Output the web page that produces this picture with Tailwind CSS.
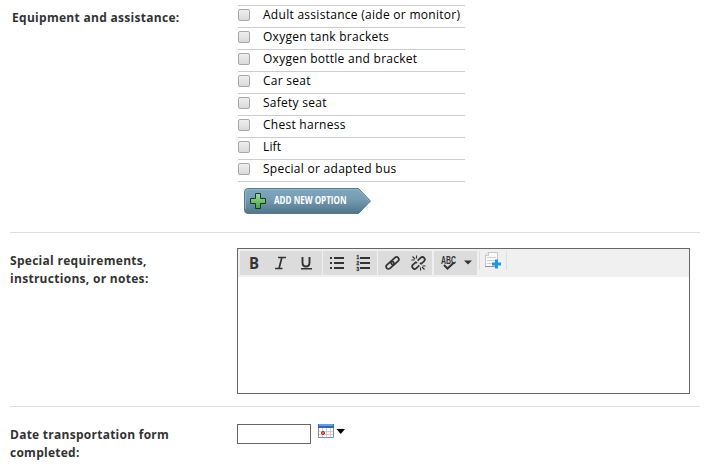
<!DOCTYPE html>
<html lang="en">
<head>
    <meta charset="UTF-8">
    <meta name="viewport" content="width=device-width, initial-scale=1.0">
    <title>Transportation Form</title>
    <script src="https://cdn.jsdelivr.net/npm/@tailwindcss/browser@4"></script>
</head>
<body class="bg-white w-[716px] h-[469px] overflow-hidden font-['Open_Sans',sans-serif] text-[12px] text-black">
    <form class="ml-[10px] w-[690px]">

        <!-- Equipment -->
        <div class="flex h-[232px]">
            <div class="w-[228px] pl-[2px] pt-[9px] leading-[18px] font-bold text-[#333] tracking-[0.29px]">Equipment and assistance:</div>
            <div class="w-[227px] pt-[5px]">
                <div class="border-t border-[#ccc]">
                    <label class="flex h-[22px] border-b border-[#ccc] pt-[3px]"><input type="checkbox" class="appearance-none w-[12px] h-[12px] rounded-[2px] border border-[#a8a8a8] bg-linear-to-b from-[#eee] to-[#dadada]"><span class="ml-[13px] -mt-[3px] leading-[18px] whitespace-nowrap tracking-[0.28px]">Adult assistance (aide or monitor)</span></label>
                    <label class="flex h-[22px] border-b border-[#ccc] pt-[3px]"><input type="checkbox" class="appearance-none w-[12px] h-[12px] rounded-[2px] border border-[#a8a8a8] bg-linear-to-b from-[#eee] to-[#dadada]"><span class="ml-[13px] -mt-[3px] leading-[18px] whitespace-nowrap tracking-[0.26px]">Oxygen tank brackets</span></label>
                    <label class="flex h-[22px] border-b border-[#ccc] pt-[3px]"><input type="checkbox" class="appearance-none w-[12px] h-[12px] rounded-[2px] border border-[#a8a8a8] bg-linear-to-b from-[#eee] to-[#dadada]"><span class="ml-[13px] -mt-[3px] leading-[18px] whitespace-nowrap tracking-[0.26px]">Oxygen bottle and bracket</span></label>
                    <label class="flex h-[22px] border-b border-[#ccc] pt-[3px]"><input type="checkbox" class="appearance-none w-[12px] h-[12px] rounded-[2px] border border-[#a8a8a8] bg-linear-to-b from-[#eee] to-[#dadada]"><span class="ml-[13px] -mt-[3px] leading-[18px] whitespace-nowrap tracking-[0.26px]">Car seat</span></label>
                    <label class="flex h-[22px] border-b border-[#ccc] pt-[3px]"><input type="checkbox" class="appearance-none w-[12px] h-[12px] rounded-[2px] border border-[#a8a8a8] bg-linear-to-b from-[#eee] to-[#dadada]"><span class="ml-[13px] -mt-[3px] leading-[18px] whitespace-nowrap tracking-[0.26px]">Safety seat</span></label>
                    <label class="flex h-[22px] border-b border-[#ccc] pt-[3px]"><input type="checkbox" class="appearance-none w-[12px] h-[12px] rounded-[2px] border border-[#a8a8a8] bg-linear-to-b from-[#eee] to-[#dadada]"><span class="ml-[13px] -mt-[3px] leading-[18px] whitespace-nowrap tracking-[0.26px]">Chest harness</span></label>
                    <label class="flex h-[22px] border-b border-[#ccc] pt-[3px]"><input type="checkbox" class="appearance-none w-[12px] h-[12px] rounded-[2px] border border-[#a8a8a8] bg-linear-to-b from-[#eee] to-[#dadada]"><span class="ml-[13px] -mt-[3px] leading-[18px] whitespace-nowrap tracking-[0.15px]">Lift</span></label>
                    <label class="flex h-[22px] border-b border-[#ccc] pt-[3px]"><input type="checkbox" class="appearance-none w-[12px] h-[12px] rounded-[2px] border border-[#a8a8a8] bg-linear-to-b from-[#eee] to-[#dadada]"><span class="ml-[13px] -mt-[3px] leading-[18px] whitespace-nowrap tracking-[0.28px]">Special or adapted bus</span></label>
                </div>
                <button type="button" class="block ml-[6px] mt-[6px]">
                    <svg width="128" height="26" viewBox="0 0 128 26">
                        <defs>
                            <linearGradient id="btn" x1="0" y1="0" x2="0" y2="1"><stop offset="0" stop-color="#7fa8c0"/><stop offset=".45" stop-color="#759bb1"/><stop offset="1" stop-color="#527588"/></linearGradient>
                            <linearGradient id="plus" x1="0" y1="0" x2="0" y2="1"><stop offset="0" stop-color="#a5dba0"/><stop offset="1" stop-color="#45a23c"/></linearGradient>
                        </defs>
                        <path d="M4 .5H114.500L126.500 13L114.500 25.500H4Q.5 25.500 .5 22V4Q.5 .5 4 .5Z" fill="url(#btn)" stroke="#587a8e"/>
                        <path d="M1.500 21V4.500Q1.500 1.500 4.500 1.500H114L125 13" fill="none" stroke="#9dbccd" stroke-opacity=".7"/>
                        <path d="M11.500 5.500H16.500V10.500H21.500V15.500H16.500V20.500H11.500V15.500H6.500V10.500H11.500Z" fill="url(#plus)" stroke="#123f1c" stroke-linejoin="round"/>
                        <text x="30" y="16.300" font-size="10" font-weight="700" fill="#fff" textLength="72.500" lengthAdjust="spacingAndGlyphs">ADD NEW OPTION</text>
                    </svg>
                </button>
            </div>
        </div>

        <!-- Notes -->
        <div class="flex h-[174px] border-t border-[#dedede]">
            <div class="w-[227px] pt-[19px] leading-[18px] font-bold text-[#333] tracking-[0.29px]">Special requirements,<br>instructions, or notes:</div>
            <div class="mt-[15px] w-[453px] h-[146px] border border-[#666] bg-white">
                <div class="flex h-[28px] bg-[#f0f0f0] pl-[2px] pt-[2px]">
                    <div class="w-[82px] h-[24px] bg-[#dcdcdc]">
                        <svg width="82" height="24" viewBox="0 0 82 24" fill="#333">
                            <text x="9" y="18" font-size="16" font-weight="700" textLength="10" lengthAdjust="spacingAndGlyphs">B</text>
                            <path d="M38 6.500H46M35 17.500H42.500M42 6L39 17.500" fill="none" stroke="#333" stroke-width="1.700"/>
                            <path d="M62.500 6V11.500Q62.500 15.500 66 15.500Q69.500 15.500 69.500 11.500V6" fill="none" stroke="#333" stroke-width="1.900"/>
                            <rect x="61" y="17" width="11" height="1.500"/>
                        </svg>
                    </div>
                    <div class="ml-px w-[54px] h-[24px] bg-[#dcdcdc]">
                        <svg width="54" height="24" viewBox="0 0 54 24" fill="#333">
                            <path d="M11 6H21V8H11ZM11 11H21V13H11ZM11 16H21V18H11ZM7 6H9V8H7ZM7 11H9V13H7ZM7 16H9V18H7ZM37 6H47V8H37ZM37 11H47V13H37ZM37 16H47V18H37Z"/>
                            <g font-size="4.700" font-weight="700" font-family="Liberation Sans, sans-serif" stroke="#333" stroke-width=".3">
                                <text x="33.500" y="8">1</text>
                                <text x="33.500" y="14">2</text>
                                <text x="33.500" y="20">3</text>
                            </g>
                        </svg>
                    </div>
                    <div class="ml-px w-[54px] h-[24px] bg-[#dcdcdc]">
                        <svg width="54" height="24" viewBox="0 0 54 24" fill="none" stroke="#333" stroke-width="1.700">
                            <g transform="rotate(-42 14.500 12)">
                                <rect x="6.800" y="9.700" width="9" height="4.600" rx="2.300"/>
                                <rect x="13.200" y="9.700" width="9" height="4.600" rx="2.300"/>
                            </g>
                            <g transform="rotate(-42 40.500 12)">
                                <path d="M39.500 9.600H35.300A2.400 2.400 0 0 0 35.300 14.400H39.500M41.500 9.600H45.700A2.400 2.400 0 0 1 45.700 14.400H41.500M39.300 9.600V11M41.700 14.400V13"/>
                            </g>
                            <path d="M33.500 9H36.500M38.500 4.500V7.500M34.500 5.500L37 8M44.500 15H47.500M42.500 16.500V19.500M44 16L46.500 18.500" stroke-width="1.100"/>
                        </svg>
                    </div>
                    <div class="ml-[2px] w-[43px] h-[24px] bg-[#dcdcdc]">
                        <svg width="43" height="24" viewBox="0 0 43 24" fill="#333">
                            <text x="7" y="12.500" font-size="10" font-weight="700" font-family="Liberation Sans, sans-serif" textLength="15" lengthAdjust="spacingAndGlyphs">ABC</text>
                            <path d="M10 14L13.500 17.500L20 11.500" fill="none" stroke="#333" stroke-width="2"/>
                            <path d="M30 9.500H38L34 13.500Z"/>
                        </svg>
                    </div>
                    <div class="ml-[2px] w-[28px] h-[19px] border-x border-[#dfdfdf]">
                        <svg width="26" height="19" viewBox="0 0 26 19">
                            <path d="M8 1.500H17.500V15.500H5.500V4Z" fill="#f8fafb" stroke="#c2cad1"/>
                            <path d="M8.500 1.500V4.500H5.500" fill="none" stroke="#c2cad1"/>
                            <path d="M7 6.500H16M7 9.500H16M7 12.500H14" stroke="#ccd4dc"/>
                            <path d="M5 15.500H18" stroke="#8d9296"/>
                            <path d="M16.500 8.500V17.500M12 13H21" stroke="#2196e3" stroke-width="3"/>
                        </svg>
                    </div>
                </div>
            </div>
        </div>

        <!-- Date -->
        <div class="flex h-[63px] border-t border-[#dedede]">
            <div class="w-[227px] pt-[19px] leading-[18px] font-bold text-[#333] tracking-[0.26px]">Date transportation form<br>completed:</div>
            <input type="text" class="mt-[17px] w-[74px] h-[20px] border border-[#666] bg-white px-1">
            <svg class="ml-[7px] mt-[17px]" width="28" height="15" viewBox="0 0 28 15">
                <rect x=".5" y=".5" width="15" height="13" fill="#fff" stroke="#8790ae"/>
                <path d="M4.500 4V13M8.500 4V13M12.500 4V13M1 7.500H15M1 10.500H15" stroke="#d2d2d6"/>
                <rect x="0" y="0" width="16" height="4" fill="#3565b8"/>
                <rect x="1" y="0" width="14" height="2" fill="#6d9ae0"/>
                <circle cx="5" cy="9" r="1.500" fill="#e89b91" stroke="#b71518"/>
                <path d="M18.500 5H27L22.750 10Z" fill="#000"/>
            </svg>
        </div>
    </form>
</body>
</html>
